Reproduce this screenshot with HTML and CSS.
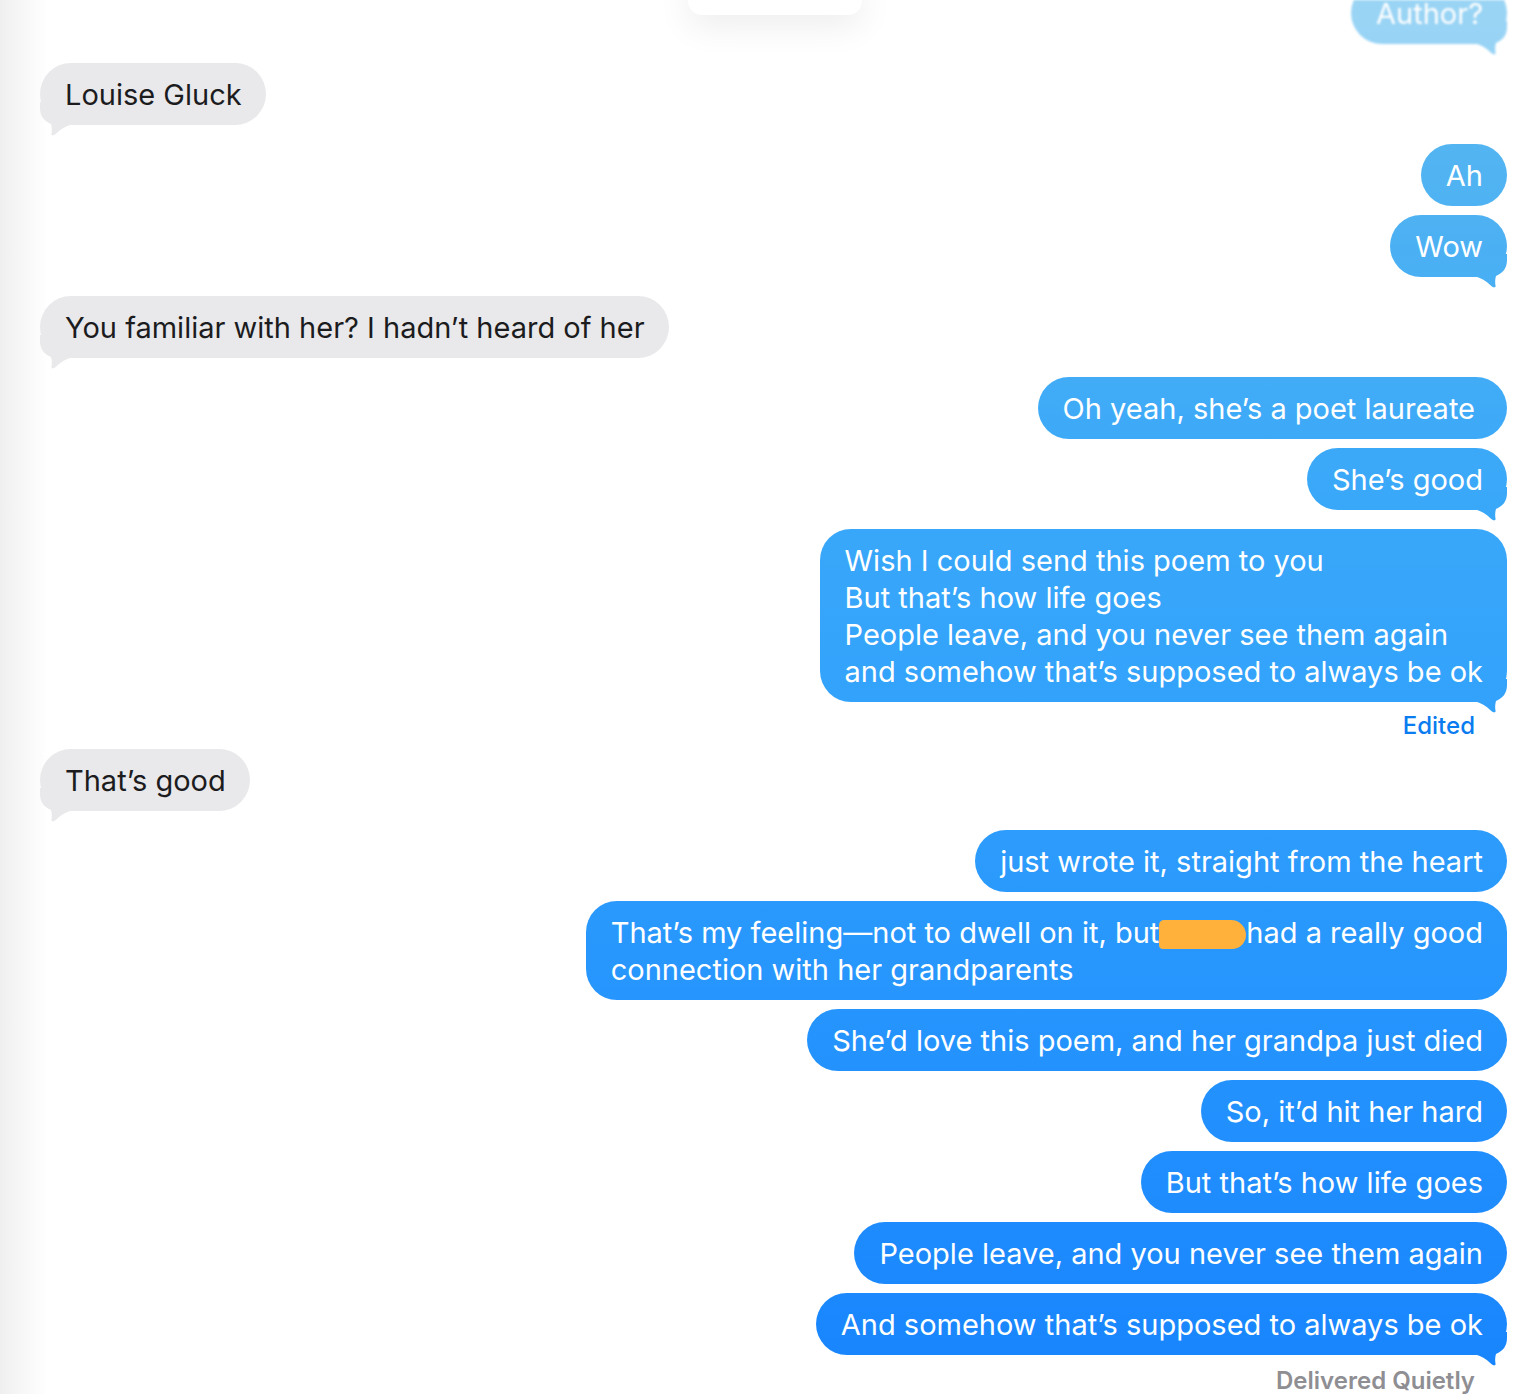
FILE: index.html
```
<!DOCTYPE html>
<html lang="en">
<head>
<meta charset="utf-8">
<title>Messages</title>
<link rel="stylesheet" href="styles.css">
</head>
<body>
<div class="top-popover"></div>
<main class="thread">
  <div class="group out-group">
    <div class="bubble out tail faded"><span class="t">Author?</span></div>
  </div>
  <div class="group in-group">
    <div class="bubble in tail"><span class="t">Louise Gluck</span></div>
  </div>
  <div class="group out-group">
    <div class="bubble out"><span class="t">Ah</span></div>
    <div class="bubble out tail"><span class="t">Wow</span></div>
  </div>
  <div class="group in-group">
    <div class="bubble in tail"><span class="t">You familiar with her? I hadn’t heard of her</span></div>
  </div>
  <div class="group out-group">
    <div class="bubble out extra-right"><span class="t">Oh yeah, she’s a poet laureate</span></div>
    <div class="bubble out tail"><span class="t">She’s good</span></div>
  </div>
  <div class="group out-group">
    <div class="bubble out tail"><span class="t">Wish I could send this poem to you<br>But that’s how life goes<br>People leave, and you never see them again<br>and somehow that’s supposed to always be ok</span></div>
    <div class="status edited">Edited</div>
  </div>
  <div class="group in-group">
    <div class="bubble in tail"><span class="t">That’s good</span></div>
  </div>
  <div class="group out-group">
    <div class="bubble out"><span class="t">just wrote it, straight from the heart</span></div>
    <div class="bubble out"><span class="t">That’s my feeling—not to dwell on it, but<span class="redact"></span>had a really good<br>connection with her grandparents</span></div>
    <div class="bubble out"><span class="t">She’d love this poem, and her grandpa just died</span></div>
    <div class="bubble out"><span class="t">So, it’d hit her hard</span></div>
    <div class="bubble out"><span class="t">But that’s how life goes</span></div>
    <div class="bubble out"><span class="t">People leave, and you never see them again</span></div>
    <div class="bubble out tail"><span class="t">And somehow that’s supposed to always be ok</span></div>
    <div class="status delivered">Delivered Quietly</div>
  </div>
</main>
</body>
</html>
```
FILE: styles.css
```
html, body {
  margin: 0;
  padding: 0;
}
body {
  height: 1394px;
  overflow: hidden;
  background: linear-gradient(to right, #efefef 0px, #f7f7f7 22px, #ffffff 48px);
  font-family: "Inter", "Liberation Sans", sans-serif;
  font-size: 29px;
  line-height: 37px;
  color: #1c1c1e;
}
.top-popover {
  position: absolute;
  left: 688px;
  top: -30px;
  width: 174px;
  height: 45px;
  background: #ffffff;
  border-radius: 14px;
  box-shadow: 0 12px 34px rgba(0, 0, 0, 0.07);
}
.thread {
  display: flex;
  flex-direction: column;
  gap: 19px;
  margin-top: -18px;
  padding: 0 7px 0 40px;
}
.group {
  display: flex;
  flex-direction: column;
  gap: 9px;
}
.out-group { align-items: flex-end; }
.in-group { align-items: flex-start; }
.bubble {
  position: relative;
  padding: 13px 24px 12px 25px;
  border-radius: 31px;
  white-space: nowrap;
}
.bubble.extra-right {
  padding-right: 32px;
}
.bubble .t {
  position: relative;
  z-index: 1;
}
.in {
  background: #e9e9eb;
  color: #1c1c1e;
}
.out {
  background: linear-gradient(to bottom, #5dbbef 0px, #4fb2f2 200px, #3ca9f8 450px, #34a4fb 650px, #2897fd 950px, #1784fe 1394px) fixed;
  color: #ffffff;
}
.tail::after {
  content: "";
  position: absolute;
  bottom: -11px;
  width: 30px;
  height: 34px;
  clip-path: path("M0 0 H30 V6 C30 14 26 19 19 22 C18 25 18 29 18.5 31.5 C19 33.5 17 34 15 32.5 C11 29 6 24.5 0 23 Z");
}
.out.tail::after {
  right: 0;
  background: inherit;
}
.in.tail::after {
  left: 0;
  background: #e9e9eb;
  transform: scaleX(-1);
}
.faded {
  opacity: 0.62;
  filter: blur(0.8px);
}
.redact {
  display: inline-block;
  width: 87px;
  height: 29px;
  margin-bottom: -6px;
  background: #ffb13c;
  border-radius: 5px 15px 14px 4px;
}
.status {
  font-size: 24px;
  line-height: 24px;
  margin-right: 32px;
}
.edited {
  color: #0a7cf0;
  font-weight: 500;
  margin-top: 3px;
  margin-bottom: -8px;
}
.delivered {
  color: #8e8e93;
  font-weight: 600;
  line-height: 30px;
  margin-top: 2px;
}
```
